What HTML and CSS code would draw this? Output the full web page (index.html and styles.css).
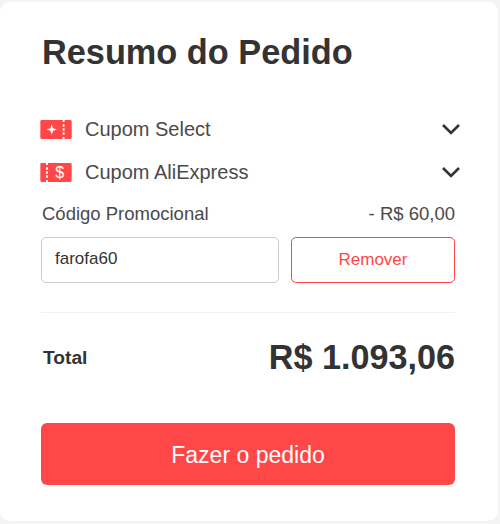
FILE: index.html
```html
<!DOCTYPE html>
<html lang="pt-BR">
<head>
    <meta charset="UTF-8">
    <title>Resumo do Pedido</title>
    <link rel="stylesheet" href="styles.css">
</head>
<body>
    <div class="card">
        <h1 class="title">Resumo do Pedido</h1>

        <div class="coupon-row">
            <svg class="coupon-icon" width="32" height="19" viewBox="0 0 33 20">
                <path fill="#ff4747" d="M1.500 0h22v2h2V0h6a1.500 1.500 0 0 1 1.500 1.500v17a1.500 1.500 0 0 1-1.500 1.500h-6v-2h-2v2h-22A1.500 1.500 0 0 1 0 18.500v-17A1.500 1.500 0 0 1 1.500 0z"/>
                <path fill="#fff" d="M12 4.500l1.400 4.100 4.100 1.400-4.100 1.400-1.400 4.100-1.400-4.100L6.500 10l4.100-1.400z"/>
                <path fill="#fff" d="M23.500 4.500h2v2.500h-2zM23.500 8.800h2v2.500h-2zM23.500 13h2v2.500h-2z"/>
            </svg>
            <span class="coupon-label">Cupom Select</span>
            <svg class="chevron" width="20" height="13" viewBox="0 0 20 13">
                <path d="M2 2l8 8 8-8" fill="none" stroke="#333" stroke-width="2.600"/>
            </svg>
        </div>

        <div class="coupon-row">
            <svg class="coupon-icon" width="32" height="19" viewBox="0 0 33 20">
                <path fill="#ff4747" d="M0 1.500A1.500 1.500 0 0 1 1.500 0H6v2h2V0h23.500A1.500 1.500 0 0 1 33 1.500v17a1.500 1.500 0 0 1-1.500 1.500H8v-2H6v2H1.500A1.500 1.500 0 0 1 0 18.500z"/>
                <path fill="#fff" d="M6 4.500h2v2.500H6zM6 8.800h2v2.500H6zM6 13h2v2.500H6z"/>
                <text class="coupon-dollar" x="20.500" y="16" text-anchor="middle">$</text>
            </svg>
            <span class="coupon-label">Cupom AliExpress</span>
            <svg class="chevron" width="20" height="13" viewBox="0 0 20 13">
                <path d="M2 2l8 8 8-8" fill="none" stroke="#333" stroke-width="2.600"/>
            </svg>
        </div>

        <div class="promo-head">
            <span>Código Promocional</span>
            <span>- R$ 60,00</span>
        </div>

        <div class="promo-form">
            <div class="promo-input">farofa60</div>
            <div class="promo-btn">Remover</div>
        </div>

        <div class="total-row">
            <span class="total-label">Total</span>
            <span class="total-value">R$ 1.093,06</span>
        </div>

        <div class="order-btn">Fazer o pedido</div>
    </div>
</body>
</html>
```

FILE: styles.css
```css
* {
    margin: 0;
    padding: 0;
    box-sizing: border-box;
}

body {
    width: 500px;
    height: 524px;
    overflow: hidden;
    padding: 2px 2px 3px 0;
    font-family: "Liberation Sans", Arial, sans-serif;
    background: #f4f4f4;
    color: #333;
}

.card {
    height: 519px;
    padding: 30px 43px 0 41px;
    background: white;
    border-radius: 10px;
}

.title {
    font-size: 34.300px;
    line-height: 40px;
    font-weight: bold;
    color: #333;
    margin-bottom: 36px;
    margin-left: 1px;
}

.coupon-row {
    display: flex;
    align-items: center;
    height: 43px;
    margin-left: -1px;
}

.coupon-icon {
    flex: none;
    margin-right: 13px;
}

.coupon-dollar {
    font-size: 17px;
    fill: white;
}

.coupon-label {
    flex: 1;
    font-size: 20px;
    color: #4a4a4a;
}

.chevron {
    flex: none;
    margin-right: -6px;
}

.promo-head {
    display: flex;
    justify-content: space-between;
    margin-top: 9px;
    margin-left: 1px;
    font-size: 18.500px;
    line-height: 21px;
    color: #4a4a4a;
}

.promo-form {
    display: flex;
    gap: 12px;
    margin-top: 13px;
    padding-bottom: 29px;
    border-bottom: 1px solid #f2f2f2;
}

.promo-input {
    width: 238px;
    height: 46px;
    padding-left: 13px;
    border: 1px solid #ccc;
    border-radius: 5px;
    font-size: 17px;
    line-height: 42px;
    color: #333;
}

.promo-btn {
    flex: 1;
    height: 46px;
    border: 1px solid #ff4747;
    border-radius: 5px;
    font-size: 17px;
    line-height: 43px;
    text-align: center;
    color: #ff4747;
}

.total-row {
    display: flex;
    justify-content: space-between;
    align-items: center;
    height: 89px;
    padding-left: 2px;
}

.total-label {
    font-size: 19.200px;
    font-weight: bold;
}

.total-value {
    font-size: 34.200px;
    font-weight: bold;
}

.order-btn {
    margin-top: 21px;
    height: 62px;
    background: #ff4747;
    border-radius: 6px;
    font-size: 23px;
    line-height: 64px;
    text-align: center;
    color: white;
}
```
